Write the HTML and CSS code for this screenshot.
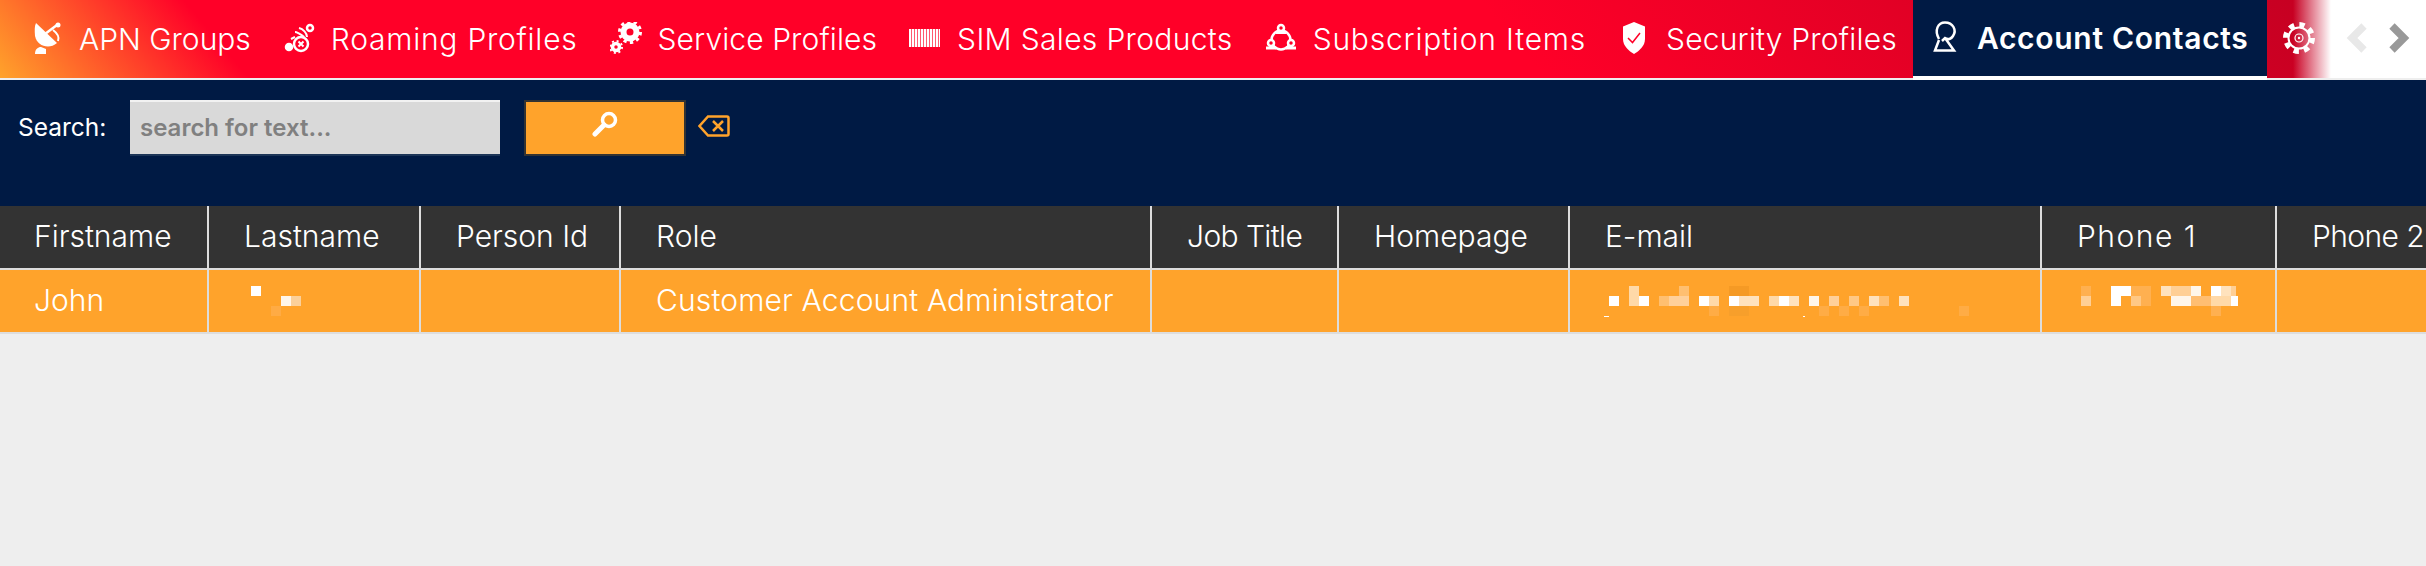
FILE: index.html
```html
<!DOCTYPE html>
<html lang="en">
<head>
    <meta charset="UTF-8">
    <title>Account Contacts</title>
    <link rel="stylesheet" href="styles.css">
</head>
<body>

<nav class="tabs">
    <a class="tab">
        <svg class="icon" viewBox="0 0 32 32" fill="#fff">
            <path d="M5 1 L26 21 C18 28 6 24 4 14 C3.500 9 3.500 4 5 1Z"/>
            <path d="M14 12 L26 3" stroke="#fff" stroke-width="2.500" fill="none"/>
            <circle cx="27" cy="3" r="2.500"/>
            <path d="M22 8 C26 11 29 14 27 19" stroke="#fff" stroke-width="2" fill="none"/>
            <path d="M4 32 C4 27 7 25 10 25 L15 27 L15 32Z"/>
        </svg>
        <span class="label l1">APN Groups</span>
    </a>
    <a class="tab">
        <svg class="icon" viewBox="0 0 32 32" fill="none" stroke="#fff" stroke-width="2.500">
            <circle cx="27" cy="6" r="3" stroke-width="2.500"/>
            <circle cx="6" cy="25" r="3" fill="#fff"/>
            <circle cx="18" cy="22" r="7"/>
            <path d="M15.500 19.500 L20.500 24.500 M20.500 19.500 L15.500 24.500" stroke-width="2"/>
            <path d="M16 6 C20 7 24 11 24 15 M12 10 C13 10 18 12 21 15 M8 17 L12 15" stroke-width="2"/>
        </svg>
        <span class="label l2">Roaming Profiles</span>
    </a>
    <a class="tab">
        <svg class="icon" viewBox="0 0 32 32" fill="none" stroke="#fff">
            <circle cx="20" cy="10" r="6.500" stroke-width="6"/>
            <circle cx="20" cy="10" r="10.500" stroke-width="3" stroke-dasharray="3.300 3.300"/>
            <circle cx="6" cy="25" r="3.500" stroke-width="3.500"/>
            <circle cx="6" cy="25" r="6" stroke-width="2" stroke-dasharray="2 2.700"/>
        </svg>
        <span class="label l3">Service Profiles</span>
    </a>
    <a class="tab">
        <span class="barcode"></span>
        <span class="label l4">SIM Sales Products</span>
    </a>
    <a class="tab">
        <svg class="icon" viewBox="0 0 32 32" fill="none" stroke="#fff" stroke-width="2.500">
            <circle cx="16" cy="18" r="9.500"/>
            <circle cx="16" cy="6" r="3" fill="#ff0028"/>
            <path d="M11 10.500 H21" stroke-width="3"/>
            <circle cx="6" cy="21" r="3" fill="#ff0028"/>
            <path d="M1 26 H11" stroke-width="3"/>
            <circle cx="26" cy="21" r="3" fill="#ff0028"/>
            <path d="M21 26 H31" stroke-width="3"/>
        </svg>
        <span class="label l5">Subscription Items</span>
    </a>
    <a class="tab">
        <svg class="icon" viewBox="0 0 32 32">
            <path d="M16 0 L27 4.500 V17 C27 24 21 29 16 32 C11 29 5 24 5 17 V4.500Z" fill="#fff"/>
            <path d="M10 16 L14.500 20.500 L22 11" fill="none" stroke="#ff0028" stroke-width="1.500"/>
        </svg>
        <span class="label l6">Security Profiles</span>
    </a>
    <a class="tab active">
        <svg class="icon" viewBox="0 0 32 32" fill="none" stroke="#fff" stroke-width="2.500">
            <path d="M10 18 C5 9 9 1.500 16 1.500 C24 1.500 28 9 24 15 C22 18 19 19 16 17 L13 20 M16 17 L25 29.500 H6 L10 19"/>
        </svg>
        <span class="label l7">Account Contacts</span>
    </a>
    <a class="tab gear-tab">
        <svg class="icon" viewBox="0 0 32 32" fill="none" stroke="#fff">
            <circle cx="16" cy="16" r="13.500" stroke-width="5" stroke-dasharray="5.300 5.300"/>
            <circle cx="16" cy="16" r="10.500" stroke-width="2"/>
            <circle cx="16" cy="16" r="4" stroke-width="1.200"/>
            <circle cx="16" cy="16" r="1.200" fill="#fff" stroke="none"/>
        </svg>
    </a>
    <div class="arrows">
        <svg class="chevron" viewBox="0 0 24 30" fill="none" stroke="#e8e8e8" stroke-width="7.500"><path d="M18 3 L6 15 L18 27"/></svg>
        <svg class="chevron" viewBox="0 0 24 30" fill="none" stroke="#999" stroke-width="7.500"><path d="M6 3 L18 15 L6 27"/></svg>
    </div>
</nav>

<div class="search-panel">
    <label class="search-label" for="search">Search:</label>
    <input class="search-input" id="search" type="text" placeholder="search for text...">
    <button class="search-btn">
        <svg viewBox="0 0 26 26" width="26" height="26" fill="none" stroke="#fff">
            <circle cx="17" cy="9" r="6.500" stroke-width="3.500"/>
            <path d="M12 14 L3 23" stroke-width="5" stroke-linecap="round"/>
        </svg>
    </button>
    <svg class="clear-icon" viewBox="0 0 32 22" fill="none" stroke="#ffa32b" stroke-width="2.500">
        <path d="M10 1.500 H29 Q30.500 1.500 30.500 3 V19 Q30.500 20.500 29 20.500 H10 L1.500 11Z"/>
        <path d="M15 6 L25 16 M25 6 L15 16"/>
    </svg>
</div>

<table class="grid">
    <colgroup>
        <col class="c-first"><col class="c-last"><col class="c-person"><col class="c-role"><col class="c-job">
        <col class="c-home"><col class="c-mail"><col class="c-phone1"><col class="c-phone2">
    </colgroup>
    <thead>
        <tr>
            <th>Firstname</th>
            <th>Lastname</th>
            <th>Person Id</th>
            <th>Role</th>
            <th class="tight">Job Title</th>
            <th>Homepage</th>
            <th>E-mail</th>
            <th class="loose">Phone 1</th>
            <th class="tight">Phone 2</th>
        </tr>
    </thead>
    <tbody>
        <tr>
            <td>John</td>
            <td class="blurred">
                <svg width="100" height="40" viewBox="0 0 100 40">
                    <rect x="42" y="6" width="10" height="10" fill="#fff"/>
                    <rect x="72" y="16" width="10" height="10" fill="#fff6ea"/>
                    <rect x="82" y="16" width="10" height="10" fill="#fbd09a"/>
                    <rect x="62" y="26" width="10" height="10" fill="#ffab44"/>
                </svg>
            </td>
            <td></td>
            <td class="role">Customer Account Administrator</td>
            <td></td>
            <td></td>
            <td class="blurred">
                <svg width="400" height="40" viewBox="0 0 400 40">
                    <rect x="59" y="6" width="10" height="10" fill="#ffd9a8"/>
                    <rect x="109" y="6" width="10" height="10" fill="#ffbf70"/>
                    <rect x="159" y="6" width="20" height="10" fill="#f59a25"/>
                    <rect x="39" y="16" width="10" height="10" fill="#fff"/>
                    <rect x="59" y="16" width="10" height="10" fill="#ffd9a8"/>
                    <rect x="69" y="16" width="10" height="10" fill="#fff"/>
                    <rect x="89" y="16" width="10" height="10" fill="#ffbf70"/>
                    <rect x="99" y="16" width="20" height="10" fill="#ffd09a"/>
                    <rect x="129" y="16" width="10" height="10" fill="#fff"/>
                    <rect x="139" y="16" width="10" height="10" fill="#ffd9a8"/>
                    <rect x="159" y="16" width="10" height="10" fill="#fff"/>
                    <rect x="169" y="16" width="20" height="10" fill="#ffe2bd"/>
                    <rect x="199" y="16" width="10" height="10" fill="#ffd9a8"/>
                    <rect x="209" y="16" width="10" height="10" fill="#fff"/>
                    <rect x="219" y="16" width="10" height="10" fill="#ffe2bd"/>
                    <rect x="239" y="16" width="10" height="10" fill="#fff6ea"/>
                    <rect x="259" y="16" width="10" height="10" fill="#ffd09a"/>
                    <rect x="279" y="16" width="10" height="10" fill="#ffc885"/>
                    <rect x="299" y="16" width="10" height="10" fill="#ffe2bd"/>
                    <rect x="309" y="16" width="10" height="10" fill="#ffbf70"/>
                    <rect x="329" y="16" width="10" height="10" fill="#ffe2bd"/>
                    <rect x="139" y="26" width="10" height="10" fill="#ffac45"/>
                    <rect x="159" y="26" width="20" height="10" fill="#f79f2b"/>
                    <rect x="249" y="26" width="10" height="10" fill="#ffac45"/>
                    <rect x="269" y="26" width="10" height="10" fill="#ffac45"/>
                    <rect x="289" y="26" width="10" height="10" fill="#ffac45"/>
                    <rect x="389" y="26" width="10" height="10" fill="#ffac45"/>
                    <rect x="34" y="36" width="5" height="1" fill="#fff"/>
                    <rect x="233" y="36" width="2" height="1" fill="#fff"/>
                </svg>
            </td>
            <td class="blurred">
                <svg width="230" height="40" viewBox="0 0 230 40">
                    <rect x="39" y="6" width="10" height="10" fill="#ffb050"/>
                    <rect x="69" y="6" width="20" height="10" fill="#fff"/>
                    <rect x="89" y="6" width="20" height="10" fill="#ffb050"/>
                    <rect x="119" y="6" width="10" height="10" fill="#ffe2bd"/>
                    <rect x="129" y="6" width="20" height="10" fill="#ffcf95"/>
                    <rect x="149" y="6" width="10" height="10" fill="#fff6ea"/>
                    <rect x="169" y="6" width="10" height="10" fill="#fff"/>
                    <rect x="179" y="6" width="10" height="10" fill="#ffe2bd"/>
                    <rect x="189" y="6" width="5" height="10" fill="#ffcf95"/>
                    <rect x="39" y="16" width="10" height="10" fill="#ffcf95"/>
                    <rect x="69" y="16" width="10" height="10" fill="#fff"/>
                    <rect x="89" y="16" width="10" height="10" fill="#ffc885"/>
                    <rect x="99" y="16" width="10" height="10" fill="#ffb050"/>
                    <rect x="129" y="16" width="20" height="10" fill="#fff6ea"/>
                    <rect x="149" y="16" width="20" height="10" fill="#ffbe72"/>
                    <rect x="169" y="16" width="20" height="10" fill="#ffd9a8"/>
                    <rect x="189" y="16" width="7" height="10" fill="#fff"/>
                    <rect x="169" y="26" width="10" height="10" fill="#ffb050"/>
                </svg>
            </td>
            <td></td>
        </tr>
    </tbody>
</table>

</body>
</html>
```

FILE: styles.css
```css
/* General styling */
body {
    font-family: "Inter", "Liberation Sans", sans-serif;
    margin: 0;
    padding: 0;
    background-color: #eeeeee;
    color: #fff;
    overflow: hidden;
}

/* Top tab bar */
.tabs {
    display: flex;
    height: 78px;
    padding-left: 15px;
    border-bottom: 2px solid #eeeeee;
    background: linear-gradient(50deg, #ffa32b 0, #ff0028 10%, #ff0028 62%, #c60022 95%);
}
.tab {
    display: flex;
    align-items: center;
    gap: 16px;
    padding: 0 16px;
    white-space: nowrap;
}
.icon {
    width: 32px;
    height: 32px;
    margin-bottom: 3px;
    flex: none;
}
.barcode {
    width: 31px;
    height: 18px;
    margin: 0 1px 3px 0;
    flex: none;
    background: repeating-linear-gradient(90deg, #fff 0 2px, #ff5a70 2px 3px);
}
.label {
    font-size: 30px;
    font-weight: 300;
}
/* the labels keep the reference's widths */
.l2 { letter-spacing: 0.75px; }
.l3 { letter-spacing: 0.1px; }
.l4 { letter-spacing: 0.33px; }
.l5 { letter-spacing: 0.8px; }
.l6 { letter-spacing: 0.18px; }
.l7 { letter-spacing: 0.7px; }
.tab.active {
    background-color: #001a44;
    height: 76px;
    padding-right: 18px;
    border-bottom: 4px solid #fff;
}
.tab.active .label {
    font-weight: 600;
}

/* Scroll arrows with the white fade over the last tab */
.arrows {
    position: relative;
    margin-left: auto;
    width: 98px;
    height: 78px;
    background-color: #fff;
    display: flex;
    align-items: center;
    gap: 16px;
    padding-left: 15px;
    box-sizing: border-box;
}
.arrows::before {
    content: "";
    position: absolute;
    left: -38px;
    top: 0;
    width: 38px;
    height: 78px;
    background: linear-gradient(to right, rgba(255, 255, 255, 0), #fff);
}
.chevron {
    width: 24px;
    height: 30px;
    margin-bottom: 2px;
}

/* Search band */
.search-panel {
    display: flex;
    align-items: flex-start;
    height: 106px;
    padding: 20px 0 0 18px;
    background-color: #001a44;
}
.search-label {
    font-size: 24.500px;
    line-height: 54px;
    width: 112px;
}
.search-input {
    width: 370px;
    height: 56px;
    box-sizing: border-box;
    padding: 0 10px 2px;
    border: none;
    border-top: 2px solid #f2f2f2;
    border-bottom: 2px solid #1c3557;
    background-color: #d9d9d9;
    font-family: inherit;
    font-size: 24px;
    font-weight: 600;
}
.search-input::placeholder {
    color: #808080;
    opacity: 1;
}
.search-btn {
    width: 162px;
    height: 56px;
    margin-left: 24px;
    padding: 0 0 6px;
    border: 2px solid #333;
    background-color: #ffa32b;
}
.clear-icon {
    width: 32px;
    height: 22px;
    margin: 15px 0 0 12px;
}

/* Contacts table */
.grid {
    width: 2426px;
    table-layout: fixed;
    border-collapse: separate;
    border-spacing: 0;
}
.c-first { width: 209px; }
.c-last { width: 212px; }
.c-person { width: 200px; }
.c-role { width: 531px; }
.c-job { width: 187px; }
.c-home { width: 231px; }
.c-mail { width: 472px; }
.c-phone1 { width: 235px; }
.c-phone2 { width: 149px; }
th, td {
    height: 60px;
    padding: 0 0 2px 35px;
    box-sizing: content-box;
    border-right: 2px solid #dddddd;
    border-bottom: 2px solid #dddddd;
    font-size: 30px;
    font-weight: 300;
    text-align: left;
    white-space: nowrap;
    overflow: hidden;
}
th:first-child, td:first-child {
    padding-left: 34px;
}
th {
    background-color: #333;
}
td {
    background-color: #ffa32b;
}
th:last-child, td:last-child {
    border-right: none;
    padding-left: 35px;
}
th.tight {
    letter-spacing: -0.6px;
}
th.loose {
    letter-spacing: 1.5px;
}
td.role {
    letter-spacing: 0.15px;
}
td.blurred {
    padding: 0;
    vertical-align: top;
}
td.blurred svg {
    display: block;
    margin-top: 10px;
}
```
